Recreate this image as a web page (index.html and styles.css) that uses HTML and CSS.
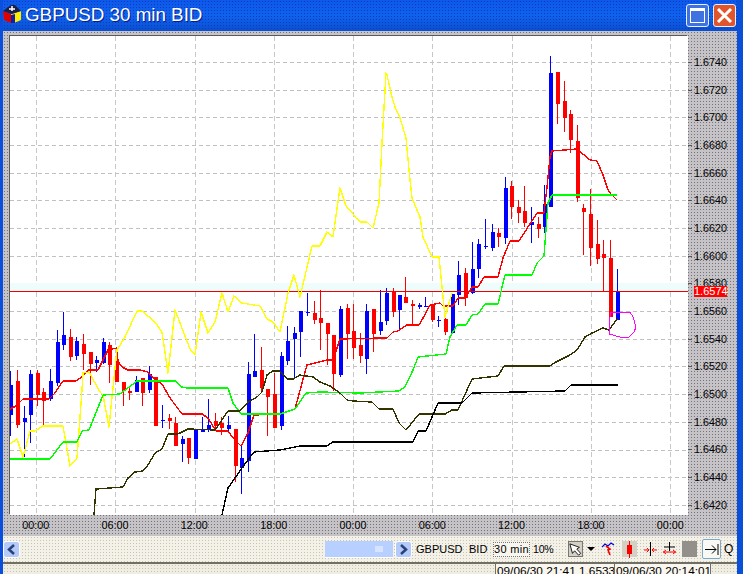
FILE: index.html
```html
<!DOCTYPE html>
<html lang="en">
  <head>
    <meta charset="UTF-8" />
    <title>GBPUSD 30 min BID</title>
    <link rel="stylesheet" href="styles.css">
  </head>
  <body>
    <div class="window">
      <div class="titlebar">
        <svg class="app-icon" width="20" height="20" viewBox="0 0 20 20">
          <path d="M1 7 L9 10 V19 L2 16 Z" fill="#e00000" />
          <path d="M9 10 L19 7 V16 L12 19 H9 Z" fill="#ffee00" />
          <path d="M9 11 L13 10 V19 L9 19 Z" fill="#1020a0" />
          <path d="M1 7 L9 1 H13 L19 7 L10 10 Z" fill="#182048" />
          <path d="M7 5 H13 M10 2 V7" stroke="#fff" stroke-width="1.5" />
        </svg>
        <span class="title-text">GBPUSD 30 min BID</span>
        <div class="win-btns">
          <div class="win-btn max-btn"><span class="max-glyph"></span></div>
          <div class="win-btn close-btn">
            <svg width="17" height="17" viewBox="0 0 17 17">
              <path d="M2 2 L15 15 M15 2 L2 15" stroke="#fff" stroke-width="3" />
            </svg>
          </div>
        </div>
      </div>

      <div class="frame">
        <div class="chart-row">
          <div class="plot"><svg id="chart" width="678" height="479" viewBox="10 36 678 479"></svg></div>
          <div class="price-axis">
            <div class="price">1.6740</div>
            <div class="price">1.6720</div>
            <div class="price">1.6700</div>
            <div class="price">1.6680</div>
            <div class="price">1.6660</div>
            <div class="price">1.6640</div>
            <div class="price">1.6620</div>
            <div class="price">1.6600</div>
            <div class="price">1.6580</div>
            <div class="price">1.6560</div>
            <div class="price">1.6540</div>
            <div class="price">1.6520</div>
            <div class="price">1.6500</div>
            <div class="price">1.6480</div>
            <div class="price">1.6460</div>
            <div class="price">1.6440</div>
            <div class="price">1.6420</div>
            <div class="last-price">1.6574</div>
          </div>
        </div>
        <div class="time-axis">
          <span>00:00</span><span>06:00</span><span>12:00</span><span>18:00</span><span>00:00</span><span>06:00</span><span>12:00</span><span>18:00</span><span>00:00</span>
        </div>
      </div>

      <div class="toolbar">
        <div class="scrollbar">
          <div class="scroll-btn">
            <svg width="9" height="11" viewBox="0 0 9 11"><path d="M7 1 L2 5.5 L7 10" fill="none" stroke="#29437a" stroke-width="2.5" /></svg>
          </div>
          <div class="scroll-track"></div>
          <div class="scroll-thumb">
            <svg width="8" height="6" viewBox="0 0 8 6"><path d="M1 0 V6 M3 0 V6 M5 0 V6 M7 0 V6" stroke="#f4f8ff" stroke-width="1" /></svg>
          </div>
          <div class="scroll-btn">
            <svg width="9" height="11" viewBox="0 0 9 11"><path d="M2 1 L7 5.5 L2 10" fill="none" stroke="#29437a" stroke-width="2.5" /></svg>
          </div>
        </div>
        <span class="tool-text symbol">GBPUSD</span>
        <span class="tool-text bid">BID</span>
        <span class="tool-text period">30 min</span>
        <span class="tool-text zoom">10%</span>

        <div class="tile pointer">
          <svg width="15" height="15" viewBox="0 0 15 15"><path d="M1 1 L4 12 L6.5 9 L11 14 L13.5 12 L9 7 L12 5 Z" fill="#fff" stroke="#000" stroke-width="1" /></svg>
        </div>
        <div class="drop-arrow"></div>
        <svg class="line-tool" width="13" height="15" viewBox="0 0 13 15">
          <path d="M0 5 L3 2 L6 4 L9 1 L12 3" fill="none" stroke="#0000e0" stroke-width="1.2" />
          <path d="M4 4 L8 7 L6 8 L8 13" fill="none" stroke="#f00000" stroke-width="1.6" />
        </svg>
        <div class="tile candle-tile">
          <svg width="7" height="17" viewBox="0 0 7 17"><path d="M3.5 0 V17" stroke="#f00" stroke-width="1" /><rect x="1" y="4" width="5" height="9" fill="#f00" /></svg>
        </div>
        <svg class="cross-tool" width="13" height="14" viewBox="0 0 13 14">
          <path d="M6.5 0 V14" stroke="#000" stroke-width="1" />
          <path d="M0 8 H5 M3 6 L5 8 L3 10 M13 8 H8 M10 6 L8 8 L10 10" fill="none" stroke="#f00" stroke-width="1" />
        </svg>
        <svg class="cross-tool two" width="13" height="14" viewBox="0 0 13 14">
          <path d="M6.5 0 V9 M1 5 H12" stroke="#000" stroke-width="1" />
          <path d="M0 10 H13 M3 8 L0.5 10 L3 12 M10 8 L12.5 10 L10 12" fill="none" stroke="#f00" stroke-width="1" />
        </svg>
        <div class="tile dark-tile"></div>
        <div class="end-btn">
          <svg width="14" height="11" viewBox="0 0 14 11"><path d="M0 5.5 H11 M7 1.5 L11 5.5 L7 9.5 M13 0 V11" fill="none" stroke="#000" stroke-width="1" /></svg>
        </div>
        <span class="tool-text quote">Q</span>
      </div>

      <div class="statusbar">
        <div class="status-cell first">09/06/30 21:41 1.6533</div>
        <div class="status-cell second">09/06/30 20:14:01</div>
      </div>
    </div>
    <script src="chart.js"></script>
  </body>
</html>
```

FILE: styles.css
```css
html,
body {
  margin: 0;
  padding: 0;
  overflow: hidden;
}

body {
  font-family: "Liberation Sans", Arial, sans-serif;
}

.window {
  width: 743px;
  height: 574px;
  box-sizing: border-box;
  display: flex;
  flex-direction: column;
  overflow: hidden;
  background-color: #0a50dc;
  border-left: 3px solid #0a50dc;
  border-right: 6px solid #0a4fd8;
}

/* title bar */
.titlebar {
  height: 31px;
  margin: 0 -6px 0 -3px;
  flex: none;
  display: flex;
  align-items: center;
  background-color: #0a5ae6;
  background-image:
    radial-gradient(#0a3cc0 0.6px, transparent 0.8px),
    linear-gradient(#0d58ea, #0f62ee 50%, #0a4fd0);
  background-size: 3px 3px, 100% 100%;
}

.app-icon {
  margin-left: 2px;
  margin-bottom: 3px;
}

.title-text {
  margin-left: 3px;
  margin-bottom: 1px;
  font-size: 18.8px;
  color: #fff;
  text-shadow: 1px 1px 0 #04208c;
}

.win-btns {
  margin-left: auto;
  margin-right: 7px;
  margin-bottom: 1px;
  display: flex;
  gap: 4px;
}

.win-btn {
  width: 23px;
  height: 23px;
  box-sizing: border-box;
  border: 1px solid #e8efff;
  border-radius: 3px;
  display: flex;
  align-items: center;
  justify-content: center;
}

.max-btn {
  background-color: #3e72e0;
}

.max-glyph {
  width: 13px;
  height: 11px;
  border: 1px solid #fff;
  border-top-width: 3px;
}

.close-btn {
  background-color: #e0562c;
}

/* gray chart frame */
.frame {
  flex: none;
  background-color: #c6c3c6;
  background-image: radial-gradient(#74727a 0.7px, transparent 0.9px);
  background-size: 3px 3px;
}

.chart-row {
  display: flex;
  padding: 5px 0 0 7px;
  position: relative;
}

.plot {
  width: 678px;
  height: 479px;
  background-color: #fff;
  box-shadow: -1px -1px 0 #5a5a5a;
}

.plot svg {
  display: block;
}

.price-axis {
  width: 49px;
  padding-top: 13px;
  box-sizing: border-box;
  height: 479px;
  position: relative;
}

.price {
  height: 27.68px;
  line-height: 27.68px;
  padding-left: 6px;
  font-size: 10.8px;
  color: #000;
  position: relative;
}

.price::before {
  content: "";
  position: absolute;
  left: 0;
  top: 13px;
  width: 4px;
  height: 1px;
  background-color: #555;
}

.last-price {
  position: absolute;
  left: 6px;
  top: 250px;
  width: 33px;
  height: 11px;
  line-height: 11px;
  text-align: center;
  font-size: 11px;
  color: #fff;
  background-color: #ff0000;
}

.time-axis {
  display: flex;
  height: 21px;
  line-height: 20px;
  margin-left: -7px;
  font-size: 10.8px;
  color: #000;
}

.time-axis span {
  width: 79.33px;
  flex: none;
  text-align: center;
}

/* scroll and tool bar */
.toolbar {
  height: 26px;
  flex: none;
  display: flex;
  align-items: center;
  background-color: #f4f2e8;
  background-image: radial-gradient(#c8c4b4 0.6px, transparent 0.8px);
  background-size: 3px 3px;
  border-bottom: 2px solid #716f64;
}

.scrollbar {
  width: 409px;
  height: 17px;
  flex: none;
  display: flex;
  align-items: stretch;
}

.scroll-btn {
  width: 17px;
  flex: none;
  box-sizing: border-box;
  display: flex;
  align-items: center;
  justify-content: center;
  border: 1px solid #fff;
  border-radius: 3px;
  background-color: #b4caf8;
}

.scroll-track {
  flex: 1;
}

.scroll-thumb {
  width: 68px;
  margin-right: 2px;
  box-sizing: border-box;
  display: flex;
  align-items: center;
  justify-content: flex-end;
  padding-right: 10px;
  border-bottom: 1px solid #fff;
  background-color: #b8d0ff;
}

.tool-text {
  font-size: 11px;
  color: #000;
  flex: none;
  white-space: nowrap;
}

.symbol {
  width: 46px;
  margin-left: 4px;
}

.bid {
  width: 18px;
  margin-left: 7px;
}

.period {
  width: 37px;
  margin-left: 6px;
  box-sizing: border-box;
  height: 15px;
  line-height: 13px;
  text-align: center;
  letter-spacing: 0.3px;
  border: 1px dotted #777;
  background-color: #f8f6ee;
}

.zoom {
  width: 20px;
  margin-left: 3px;
  font-size: 10.5px;
  letter-spacing: -0.2px;
}

.tile {
  height: 16px;
  flex: none;
  display: flex;
  align-items: center;
  justify-content: center;
  background-color: #d4d0c4;
}

.pointer {
  width: 15px;
  margin-left: 15px;
  box-sizing: border-box;
  border: 1px solid #777;
}

.drop-arrow {
  margin-left: 4px;
  border-left: 4px solid transparent;
  border-right: 4px solid transparent;
  border-top: 4px solid #000;
}

.line-tool {
  margin-left: 7px;
  flex: none;
}

.candle-tile {
  width: 15px;
  margin-left: 7px;
}

.cross-tool {
  margin-left: 7px;
  flex: none;
}

.cross-tool.two {
  margin-left: 6px;
}

.dark-tile {
  width: 15px;
  margin-left: 6px;
  background-color: #93908c;
}

.end-btn {
  width: 19px;
  height: 20px;
  margin-left: 5px;
  flex: none;
  box-sizing: border-box;
  display: flex;
  align-items: center;
  justify-content: center;
  border: 1px solid #7fa8c8;
  border-radius: 2px;
  background-color: #f8f8f4;
}

.quote {
  margin-left: 3px;
  font-size: 12px;
}

/* status bar, cut off by the bottom of the window */
.statusbar {
  flex: 1;
  min-height: 0;
  display: flex;
  padding-left: 492px;
  background-color: #f0eee2;
  background-image: radial-gradient(#c8c4b4 0.6px, transparent 0.8px);
  background-size: 3px 3px;
}

.status-cell {
  height: 16px;
  line-height: 15px;
  font-size: 11.8px;
  color: #000;
  white-space: nowrap;
  box-sizing: border-box;
  border-left: 1px solid #716f64;
  background-color: #f8f6ee;
  padding-left: 1px;
}

.first {
  width: 119px;
}

.second {
  width: 97px;
  border-right: 1px solid #716f64;
}
```

FILE: chart.js
```js
const SVG_NS = "http://www.w3.org/2000/svg";
const chart = document.getElementById("chart");

// x, colour, high, low, body top, body bottom (screen pixels)
const candles = [
  [10, "b", 371, 436, 385, 415], [17, "r", 370, 428, 381, 425], [24, "b", 406, 457, 418, 422],
  [30, "b", 370, 443, 374, 415], [37, "r", 370, 406, 373, 395], [43, "r", 388, 425, 392, 401],
  [50, "b", 369, 401, 381, 399], [57, "b", 330, 386, 342, 383], [63, "b", 312, 350, 335, 345],
  [70, "r", 329, 361, 337, 357], [76, "b", 337, 360, 341, 356], [83, "r", 334, 370, 344, 354],
  [90, "r", 352, 385, 352, 364], [96, "b", 356, 372, 360, 363], [103, "b", 338, 364, 342, 363],
  [109, "r", 342, 383, 345, 365], [116, "r", 348, 382, 359, 382], [123, "r", 382, 406, 382, 391],
  [129, "r", 386, 400, 391, 393], [136, "b", 376, 392, 380, 392], [142, "r", 378, 406, 378, 393],
  [149, "b", 366, 393, 374, 390], [155, "r", 377, 426, 377, 426], [162, "b", 405, 428, 420, 421],
  [169, "r", 414, 429, 418, 421], [175, "r", 417, 446, 423, 446], [182, "b", 436, 462, 439, 444],
  [188, "r", 438, 464, 438, 458], [195, "b", 430, 459, 430, 459], [202, "b", 417, 432, 429, 432],
  [208, "b", 399, 432, 425, 429], [215, "r", 413, 430, 421, 426], [221, "r", 417, 435, 423, 428],
  [228, "b", 416, 432, 425, 429], [235, "r", 429, 482, 429, 466], [241, "b", 446, 494, 458, 468],
  [248, "b", 362, 472, 374, 461], [254, "b", 334, 377, 371, 377], [261, "r", 347, 391, 370, 388],
  [267, "r", 389, 436, 389, 397], [274, "r", 373, 428, 394, 428], [281, "b", 352, 430, 356, 426],
  [287, "b", 326, 365, 341, 361], [294, "b", 327, 377, 333, 339], [300, "b", 311, 357, 311, 332],
  [307, "b", 293, 316, 312, 313], [314, "r", 301, 324, 313, 320], [320, "r", 290, 350, 318, 323],
  [327, "r", 323, 365, 323, 334], [333, "r", 335, 391, 335, 374], [340, "b", 306, 377, 309, 375],
  [347, "r", 304, 359, 308, 334], [353, "r", 304, 359, 331, 348], [360, "r", 333, 363, 345, 356],
  [366, "b", 304, 374, 311, 359], [373, "r", 309, 352, 309, 334], [380, "b", 290, 335, 322, 331],
  [386, "b", 288, 325, 293, 321], [393, "r", 288, 317, 291, 312], [399, "b", 295, 330, 295, 310],
  [405, "r", 277, 303, 297, 303], [412, "r", 300, 324, 304, 306], [419, "b", 303, 309, 305, 307],
  [425, "b", 297, 307, 306, 307], [432, "r", 305, 322, 305, 320], [438, "b", 316, 327, 320, 321],
  [445, "r", 318, 335, 319, 332], [452, "b", 293, 334, 294, 333], [458, "b", 261, 305, 275, 295],
  [465, "r", 268, 306, 273, 298], [472, "b", 242, 294, 269, 293], [478, "b", 239, 278, 244, 269],
  [485, "b", 219, 249, 246, 247], [492, "b", 224, 251, 232, 248], [498, "r", 228, 247, 233, 237],
  [505, "b", 177, 244, 188, 238], [511, "r", 181, 219, 186, 207], [518, "r", 200, 223, 207, 213],
  [524, "r", 186, 227, 211, 223], [531, "b", 207, 243, 222, 225], [538, "r", 217, 238, 224, 229],
  [544, "b", 185, 233, 204, 227], [550, "b", 56, 207, 73, 207], [557, "r", 72, 124, 72, 104],
  [564, "r", 81, 132, 101, 118], [570, "r", 110, 153, 114, 140], [577, "r", 125, 202, 141, 198],
  [583, "r", 204, 255, 208, 212], [590, "r", 189, 266, 214, 248], [597, "r", 220, 264, 244, 259],
  [603, "r", 240, 291, 254, 258], [610, "r", 240, 317, 258, 317], [617, "b", 269, 320, 291, 320],
];

const redLine = [
  [10, 409], [16, 406], [23, 399], [49, 399], [55, 393], [63, 381], [76, 381], [83, 376], [88, 370],
  [98, 370], [108, 350], [117, 348], [117, 360], [122, 367], [128, 370], [140, 370], [148, 372],
  [153, 378], [162, 384], [170, 398], [182, 414], [202, 414], [208, 418], [216, 431], [228, 431],
  [233, 438], [241, 446], [248, 433], [254, 415], [280, 414], [295, 409], [302, 383], [307, 365],
  [327, 360], [333, 360], [340, 339], [382, 338], [387, 338], [393, 332], [398, 331], [407, 325],
  [419, 325], [423, 318], [430, 305], [440, 303], [443, 306], [453, 306], [458, 298], [465, 298],
  [472, 287], [478, 287], [484, 277], [498, 277], [503, 258], [510, 241], [519, 241], [537, 213],
  [544, 213], [547, 187], [550, 157], [552, 151], [577, 149], [590, 160], [597, 161], [603, 175],
  [608, 190], [611, 194], [617, 200],
];

const yellowLine = [
  [10, 444], [17, 439], [23, 457], [30, 431], [35, 431], [43, 426], [63, 426], [70, 466], [77, 458],
  [82, 390], [83, 373], [89, 372], [100, 392], [103, 395], [109, 427], [115, 368], [117, 350],
  [125, 337], [137, 311], [142, 311], [155, 322], [162, 332], [168, 373], [175, 310], [190, 349],
  [195, 355], [201, 312], [208, 333], [215, 322], [222, 293], [228, 312], [234, 296], [242, 303],
  [260, 306], [267, 319], [273, 322], [280, 332], [288, 293], [294, 275], [300, 297], [312, 246],
  [320, 246], [327, 232], [333, 237], [340, 188], [346, 206], [360, 222], [367, 222], [373, 228],
  [379, 203], [382, 143], [386, 73], [387, 75], [392, 97], [395, 107], [400, 118], [406, 138],
  [410, 180], [412, 198], [420, 217], [423, 237], [432, 257], [439, 257], [445, 317], [452, 293],
];

const greenLine = [
  [10, 459], [50, 459], [63, 442], [77, 442], [82, 431], [89, 430], [103, 395], [120, 394], [137, 381],
  [175, 381], [182, 387], [187, 388], [228, 388], [233, 403], [241, 414], [280, 414], [295, 409],
  [306, 393], [320, 392], [360, 393], [399, 391], [405, 387], [413, 370], [418, 357], [446, 354],
  [450, 337], [457, 325], [466, 325], [472, 315], [478, 314], [485, 304], [498, 304], [505, 275],
  [532, 275], [537, 263], [544, 256], [548, 203], [552, 195], [617, 195],
];

const oliveLine = [
  [94, 515], [96, 489], [123, 487], [128, 478], [135, 472], [143, 471], [148, 465], [155, 453],
  [162, 449], [168, 434], [177, 434], [180, 433], [188, 429], [215, 430], [228, 411], [240, 411],
  [248, 402], [257, 397], [262, 392], [267, 375], [273, 371], [280, 371], [287, 379], [293, 379],
  [300, 375], [313, 377], [320, 382], [330, 386], [340, 393], [347, 400], [353, 401], [372, 402],
  [379, 409], [393, 409], [399, 423], [406, 430], [419, 414], [445, 414], [452, 410], [458, 410],
  [472, 379], [498, 376], [504, 366], [550, 366], [556, 362], [570, 355], [577, 350], [585, 337],
  [592, 333], [603, 328], [609, 330], [618, 318],
];

const blackLine = [
  [222, 515], [228, 488], [242, 468], [254, 452], [280, 450], [300, 446], [327, 446], [333, 442],
  [413, 442], [418, 431], [426, 431], [438, 403], [462, 403], [472, 393], [565, 391], [571, 385],
  [618, 385],
];

const magentaLine = [
  [610, 317], [610, 312], [630, 312], [633, 317], [636, 327], [634, 332], [629, 337], [620, 337],
  [609, 334], [609, 330], [610, 317],
];

function add(tag, attrs) {
  const el = document.createElementNS(SVG_NS, tag);
  Object.keys(attrs).forEach((key) => el.setAttribute(key, attrs[key]));
  chart.appendChild(el);
  return el;
}

function drawLine(points, color, width) {
  add("polyline", {
    points: points.map((p) => p.join(",")).join(" "),
    fill: "none",
    stroke: color,
    "stroke-width": width,
    "stroke-linejoin": "round",
    "shape-rendering": "crispEdges",
  });
}

// grid
for (let i = 0; i < 17; i++) {
  const y = Math.round(62 + i * 27.68) + 0.5;
  add("line", { x1: 10, x2: 688, y1: y, y2: y, stroke: "#c0c0c0", "stroke-dasharray": "4 3" });
}
for (let i = 0; i < 9; i++) {
  const x = Math.round(36 + i * 79.25) + 0.5;
  add("line", { x1: x, x2: x, y1: 36, y2: 515, stroke: "#c8c8c8", "stroke-dasharray": "5 3" });
}

// band just over the last price
add("rect", { x: 10, y: 283, width: 678, height: 8, fill: "#effcfc" });

candles.forEach(([x, colour, high, low, top, bottom]) => {
  const fill = colour === "b" ? "#0000ff" : "#ff0000";
  add("rect", { x: x, y: high, width: 1, height: low - high, fill: fill });
  add("rect", { x: x - 1, y: top, width: 4, height: Math.max(bottom - top, 1), fill: fill });
});

add("rect", { x: 10, y: 291, width: 678, height: 1, fill: "#ee0000" });

drawLine(redLine, "#ff0000", 1.4);
drawLine(yellowLine, "#ffff00", 1.4);
drawLine(greenLine, "#00ff00", 1.4);
drawLine(oliveLine, "#333300", 1.4);
drawLine(blackLine, "#000000", 1.4);
drawLine(magentaLine, "#ff00ff", 1);
```
